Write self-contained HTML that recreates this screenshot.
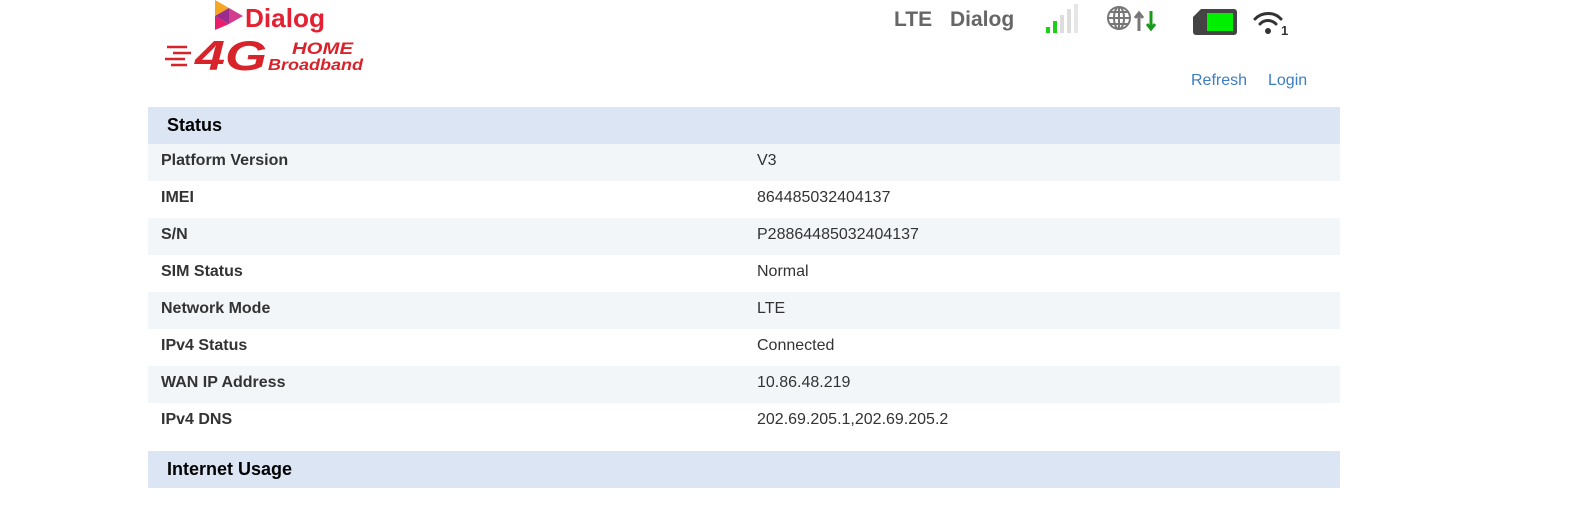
<!DOCTYPE html>
<html><head><meta charset="utf-8"><style>
body{margin:0;width:1594px;height:506px;background:#fff;font-family:"Liberation Sans",Arial,sans-serif;overflow:hidden;position:relative}
.abs{position:absolute}
.tbl{position:absolute;left:148px;width:1192px}
.hd{height:37px;background:#dbe5f4;font-weight:bold;font-size:18px;line-height:37px;padding-left:19px;color:#000;box-sizing:border-box}
.row{height:37px;line-height:34px;font-size:16px;color:#333;position:relative}
.row b{position:absolute;left:13px}
.row span{position:absolute;left:609px}
.top{font-weight:bold;font-size:21px;color:#666}
a{color:#3c7dc4;text-decoration:none;font-size:16px}
</style></head><body>
<svg class="abs" style="left:165px;top:0" width="205" height="75">
<polygon points="50,0 64,8 50,16" fill="#f5a623"/>
<polygon points="64,8 78,16 64,24" fill="#d43d8f"/>
<polygon points="50,16 64,24 50,30" fill="#ec1c6c"/>
<polygon points="50,16 64,8 64,24" fill="#9b2c8f"/>
<text x="80" y="27" font-family="Liberation Sans" font-weight="bold" font-size="26" fill="#e42032" textLength="80" lengthAdjust="spacingAndGlyphs">Dialog</text>
<g stroke="#d8232a" stroke-width="2.5"><line x1="2" y1="47" x2="22" y2="47"/><line x1="8" y1="53" x2="26" y2="53"/><line x1="0" y1="59" x2="20" y2="59"/><line x1="6" y1="65" x2="22" y2="65"/></g>
<text x="30" y="70" font-family="Liberation Sans" font-weight="bold" font-style="italic" font-size="42" fill="#d8232a" textLength="72" lengthAdjust="spacingAndGlyphs">4G</text>
<text x="127" y="54" font-family="Liberation Sans" font-weight="bold" font-style="italic" font-size="17" fill="#d8232a" textLength="61" lengthAdjust="spacingAndGlyphs">HOME</text>
<text x="103" y="70" font-family="Liberation Sans" font-weight="bold" font-style="italic" font-size="16" fill="#d8232a" textLength="95" lengthAdjust="spacingAndGlyphs">Broadband</text>
</svg>
<div class="abs top" style="left:894px;top:8px">LTE</div>
<div class="abs top" style="left:950px;top:8px">Dialog</div>
<svg class="abs" style="left:1045px;top:4px" width="34" height="30">
<rect x="1" y="23" width="4" height="6" fill="#19d119"/><rect x="8" y="17" width="4" height="12" fill="#19d119"/>
<rect x="15" y="11" width="4" height="18" fill="#ddd"/><rect x="22" y="5" width="4" height="24" fill="#ddd"/><rect x="29" y="0" width="4" height="29" fill="#e6e6e6"/>
</svg>
<svg class="abs" style="left:1106px;top:5px" width="56" height="28">
<g fill="none" stroke="#777" stroke-width="2"><circle cx="13" cy="13" r="11"/><ellipse cx="13" cy="13" rx="5" ry="11"/><line x1="2" y1="13" x2="24" y2="13"/><line x1="4" y1="7" x2="22" y2="7"/><line x1="4" y1="19" x2="22" y2="19"/><line x1="13" y1="2" x2="13" y2="24"/></g>
<path d="M33 26V9M29 13l4-5 4 5" stroke="#777" stroke-width="3" fill="none"/>
<path d="M45 6v18M41 19l4 5 4-5" stroke="#1a9a1a" stroke-width="3" fill="none"/>
</svg>
<svg class="abs" style="left:1193px;top:9px" width="44" height="26">
<path d="M8 0H41a3 3 0 0 1 3 3V23a3 3 0 0 1-3 3H3a3 3 0 0 1-3-3V8Z" fill="#444"/>
<rect x="14" y="4" width="26" height="18" fill="#00ee00"/>
</svg>
<svg class="abs" style="left:1253px;top:10px" width="40" height="28">
<g fill="none" stroke="#333" stroke-width="3" stroke-linecap="round"><path d="M2 9a18 18 0 0 1 26 0"/><path d="M7 14a11 11 0 0 1 16 0"/></g>
<circle cx="15" cy="21" r="3" fill="#333"/>
<text x="28" y="25" font-family="Liberation Sans" font-weight="bold" font-size="13" fill="#333">1</text>
</svg>
<a class="abs" style="left:1191px;top:72px">Refresh</a>
<a class="abs" style="left:1268px;top:72px">Login</a>
<div class="tbl" style="top:107px">
<div class="hd">Status</div>
<div class="row" style="background:#f3f6f9"><b>Platform Version</b><span>V3</span></div>
<div class="row"><b>IMEI</b><span>864485032404137</span></div>
<div class="row" style="background:#f3f6f9"><b>S/N</b><span>P28864485032404137</span></div>
<div class="row"><b>SIM Status</b><span>Normal</span></div>
<div class="row" style="background:#f3f6f9"><b>Network Mode</b><span>LTE</span></div>
<div class="row"><b>IPv4 Status</b><span>Connected</span></div>
<div class="row" style="background:#f3f6f9"><b>WAN IP Address</b><span>10.86.48.219</span></div>
<div class="row"><b>IPv4 DNS</b><span>202.69.205.1,202.69.205.2</span></div>
</div>
<div class="tbl" style="top:451px"><div class="hd">Internet Usage</div></div>
</body></html>
